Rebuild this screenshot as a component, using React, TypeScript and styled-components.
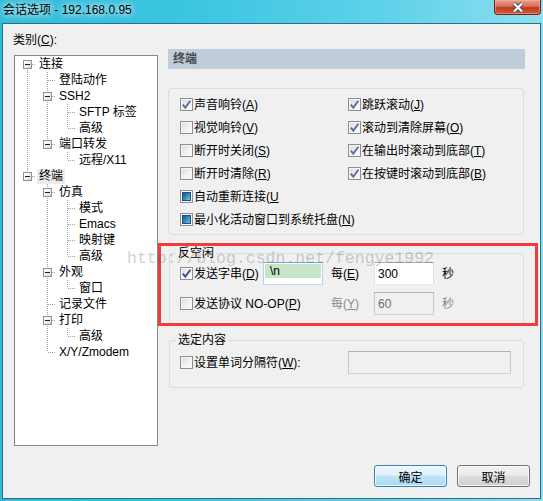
import React from "react";
import styled, { createGlobalStyle, css } from "styled-components";

const GlobalStyle = createGlobalStyle`
  html, body { margin: 0; padding: 0; background: #3fc6e1; }
  body {
    font-family: "Liberation Sans", "Noto Sans CJK SC", sans-serif;
    font-size: 12px;
    color: #000;
  }
  * { box-sizing: border-box; }
`;

const Window = styled.div`
  position: relative;
  width: 543px;
  height: 501px;
  display: flex;
  flex-direction: column;
  padding: 0 2px 2px 2px;
  background: linear-gradient(90deg, #2fbcd9 0%, #3bc5e1 35%, #5ed1e9 70%, #8cdff0 100%);
  overflow: hidden;
`;

const TitleBar = styled.div`
  height: 23px;
  display: flex;
  align-items: flex-start;
  justify-content: space-between;
`;

const Title = styled.div`
  padding: 2px 0 0 1px;
  line-height: 16px;
  text-shadow: 0 0 6px #fff, 0 0 10px rgba(255, 255, 255, 0.8);
`;

const CloseButton = styled.div`
  width: 47px;
  height: 15px;
  border: 1px solid #6a2419;
  border-top: none;
  border-radius: 0 0 4px 4px;
  background: linear-gradient(#e6a090, #d66e58 45%, #c0391f 55%, #d45a3d);
  box-shadow: inset 0 0 0 1px rgba(255, 190, 175, 0.45);
  display: flex;
  align-items: center;
  justify-content: center;
`;

const Client = styled.div`
  flex: 1;
  background: #f0f0f0;
  border: 1px solid #2f6f86;
  display: flex;
  flex-direction: column;
  padding: 8px 10px 0 11px;
`;

const Body = styled.div`
  display: flex;
  gap: 10px;
`;

const LeftColumn = styled.div`
  display: flex;
  flex-direction: column;
`;

const Caption = styled.div`
  line-height: 16px;
  margin: 0 0 7px -1px;
`;

const Tree = styled.div`
  width: 144px;
  height: 391px;
  background: #fff;
  border: 1px solid #828790;
`;

const TreeRow = styled.div`
  display: flex;
  align-items: center;
  height: 16px;
  white-space: nowrap;
`;

type Conn = "none" | "pass" | "tee" | "end" | "first";

const dotsV = "repeating-linear-gradient(to bottom, #a0a0a0 0 1px, transparent 1px 2px)";
const dotsH = "repeating-linear-gradient(to right, #a0a0a0 0 1px, transparent 1px 2px)";

const Guide = styled.span<{ $kind: Conn }>`
  width: 20px;
  height: 16px;
  flex: none;
  display: flex;
  align-items: center;
  background-repeat: no-repeat;
  ${({ $kind }) =>
    $kind === "pass"
      ? css`
          background-image: ${dotsV};
          background-position: 12px 0;
          background-size: 1px 16px;
        `
      : $kind === "tee"
      ? css`
          background-image: ${dotsV}, ${dotsH};
          background-position: 12px 0, 13px 8px;
          background-size: 1px 16px, 7px 1px;
        `
      : $kind === "end"
      ? css`
          background-image: ${dotsV}, ${dotsH};
          background-position: 12px 0, 13px 8px;
          background-size: 1px 8px, 7px 1px;
        `
      : $kind === "first"
      ? css`
          background-image: ${dotsV}, ${dotsH};
          background-position: 12px 8px, 13px 8px;
          background-size: 1px 8px, 7px 1px;
        `
      : ""}
`;

const Expander = styled.span`
  width: 9px;
  height: 9px;
  margin-left: 8px;
  border: 1px solid #919191;
  background: linear-gradient(135deg, #fff 0%, #f2f2f2 50%, #d6d6d6 100%);
  display: flex;
  align-items: center;
  justify-content: center;
  &::after {
    content: "";
    width: 5px;
    height: 1px;
    background: #1b1b1b;
  }
`;

const NodeLabel = styled.span<{ $selected?: boolean }>`
  margin-left: 2px;
  padding: 0 2px;
  line-height: 15px;
  background: ${({ $selected }) => ($selected ? "#ececec" : "transparent")};
`;

const RightColumn = styled.div`
  width: 357px;
  padding-top: 17px;
  display: flex;
  flex-direction: column;
`;

const Header = styled.div`
  height: 20px;
  line-height: 20px;
  padding-left: 5px;
  background: #bfcddb;
  color: #4a4a4a;
  font-weight: bold;
`;

const Group = styled.div`
  margin-top: 19px;
  width: 356px;
  border: 1px solid #d5dfe5;
  border-radius: 3px;
  padding: 4px 0 3px 11px;
  display: grid;
  grid-template-columns: 168px 1fr;
`;

const GroupWrap = styled.div<{ $gap: number }>`
  position: relative;
  margin-top: ${({ $gap }) => $gap}px;
`;

const FieldGroup = styled.fieldset<{ $pad: string }>`
  margin: 0 0 0 1px;
  width: 355px;
  min-width: 0;
  border: 1px solid #d5dfe5;
  border-radius: 3px;
  padding: ${({ $pad }) => $pad};
`;

const Legend = styled.legend`
  padding: 0 2px;
  margin-left: -4px;
  line-height: 14px;
`;

const IdleGrid = styled.div`
  display: grid;
  grid-template-columns: 83px 68px 43px 68px auto;
  grid-auto-rows: 23px;
  row-gap: 7px;
  align-items: center;
`;

const SelectGrid = styled.div`
  display: grid;
  grid-template-columns: 168px auto;
  grid-auto-rows: 23px;
  align-items: center;
`;

const Highlight = styled.div`
  position: absolute;
  left: -10px;
  top: -3px;
  width: 380px;
  height: 83px;
  border: 3px solid #f03c3c;
  pointer-events: none;
`;

const CheckRow = styled.div<{ $wide?: boolean }>`
  display: flex;
  align-items: center;
  height: 23px;
  white-space: nowrap;
  ${({ $wide }) => ($wide ? "grid-column: span 2;" : "")}
`;

type BoxState = "on" | "off" | "mixed";

const Box = styled.span`
  width: 13px;
  height: 13px;
  flex: none;
  margin-right: 1px;
  border: 1px solid #8f8f8f;
  background: linear-gradient(135deg, #d9d9d9 0%, #f3f3f3 60%, #fdfdfd 100%);
  box-shadow: inset 0 0 0 1px #f6f6f6;
  display: flex;
  align-items: center;
  justify-content: center;
`;

const Fill = styled.span`
  width: 9px;
  height: 9px;
  border: 1px solid #1f5078;
  background: linear-gradient(135deg, #1b5686 0%, #3a8fc0 55%, #7ec6e6 100%);
`;

const Text = styled.span<{ $muted?: boolean }>`
  color: ${({ $muted }) => ($muted ? "#8a8a8a" : "#000")};
  line-height: 16px;
  white-space: nowrap;
`;

const TextBox = styled.div<{ $w: number; $variant: "focus" | "normal" | "disabled" }>`
  width: ${({ $w }) => $w}px;
  height: 23px;
  display: flex;
  align-items: center;
  padding: 0 3px;
  border: 1px solid;
  ${({ $variant }) =>
    $variant === "focus"
      ? css`
          background: #fff;
          border-color: #7fa9d4 #b4d2ec #c2dbf0 #b4d2ec;
          align-items: flex-start;
          padding: 1px 1px 0 1px;
        `
      : $variant === "normal"
      ? css`
          background: #fff;
          border-color: #abadb3 #dbdfe6 #e3e9ef #e2e3ea;
        `
      : css`
          background: #f0f0f0;
          color: #6d6d6d;
          border-color: #adb2b5 #c8cbcd #d0d3d5 #c8cbcd;
        `}
`;

const Selected = styled.span`
  width: 56px;
  height: 14px;
  line-height: 14px;
  padding-left: 5px;
  background: #c7e5c9;
`;

const Footer = styled.div`
  display: flex;
  justify-content: flex-end;
  gap: 10px;
  margin-top: 19px;
`;

const Button = styled.div<{ $default?: boolean }>`
  width: 73px;
  height: 22px;
  border-radius: 3px;
  display: flex;
  align-items: center;
  justify-content: center;
  border: 1px solid ${({ $default }) => ($default ? "#3c7fb1" : "#707070")};
  background: ${({ $default }) =>
    $default
      ? "linear-gradient(#ecf7fd, #dff1fc 45%, #c1e5f9 50%, #a9daf6)"
      : "linear-gradient(#f2f2f2, #ebebeb 45%, #dddddd 50%, #cfcfcf)"};
  box-shadow: inset 0 0 0 1px rgba(255, 255, 255, 0.75);
`;

const Watermark = styled.div`
  position: absolute;
  left: 127px;
  top: 251px;
  font-family: "Liberation Mono", monospace;
  font-size: 16.5px;
  line-height: 16.5px;
  color: rgba(80, 80, 80, 0.28);
  white-space: nowrap;
  pointer-events: none;
`;

function Check({ state, dark }: { state: BoxState; dark?: boolean }) {
  return (
    <Box>
      {state === "on" && (
        <svg width="11" height="11" viewBox="0 0 11 11">
          <path
            d="M1.8 5.6 L4.3 8.6 L9.4 1.8"
            fill="none"
            stroke={dark ? "#3b4f8c" : "#5a6f9f"}
            strokeWidth="1.9"
          />
        </svg>
      )}
      {state === "mixed" && <Fill />}
    </Box>
  );
}

function Label({ text, k, tail = ")" }: { text: string; k: string; tail?: string }) {
  return (
    <>
      {text}(<u>{k}</u>
      {tail}
    </>
  );
}

interface TreeNode {
  label: string;
  guides: Conn[];
  open?: boolean;
  selected?: boolean;
}

const nodes: TreeNode[] = [
  { label: "连接", guides: ["first"], open: true },
  { label: "登陆动作", guides: ["pass", "tee"] },
  { label: "SSH2", guides: ["pass", "tee"], open: true },
  { label: "SFTP 标签", guides: ["pass", "pass", "tee"] },
  { label: "高级", guides: ["pass", "pass", "end"] },
  { label: "端口转发", guides: ["pass", "end"], open: true },
  { label: "远程/X11", guides: ["pass", "none", "end"] },
  { label: "终端", guides: ["end"], open: true, selected: true },
  { label: "仿真", guides: ["none", "tee"], open: true },
  { label: "模式", guides: ["none", "pass", "tee"] },
  { label: "Emacs", guides: ["none", "pass", "tee"] },
  { label: "映射键", guides: ["none", "pass", "tee"] },
  { label: "高级", guides: ["none", "pass", "end"] },
  { label: "外观", guides: ["none", "tee"], open: true },
  { label: "窗口", guides: ["none", "pass", "end"] },
  { label: "记录文件", guides: ["none", "tee"] },
  { label: "打印", guides: ["none", "tee"], open: true },
  { label: "高级", guides: ["none", "pass", "end"] },
  { label: "X/Y/Zmodem", guides: ["none", "end"] },
];

const terminalOptions: { text: string; k: string; state: BoxState; wide?: boolean; tail?: string }[] = [
  { text: "声音响铃", k: "A", state: "on" },
  { text: "跳跃滚动", k: "J", state: "on" },
  { text: "视觉响铃", k: "V", state: "off" },
  { text: "滚动到清除屏幕", k: "O", state: "on" },
  { text: "断开时关闭", k: "S", state: "off" },
  { text: "在输出时滚动到底部", k: "T", state: "on" },
  { text: "断开时清除", k: "R", state: "off" },
  { text: "在按键时滚动到底部", k: "B", state: "on" },
  { text: "自动重新连接", k: "U", state: "mixed", wide: true, tail: "" },
  { text: "最小化活动窗口到系统托盘", k: "N", state: "mixed", wide: true },
];

export default function App() {
  return (
    <Window>
      <GlobalStyle />
      <TitleBar>
        <Title>会话选项 - 192.168.0.95</Title>
        <CloseButton>
          <svg width="14" height="11" viewBox="0 0 14 11">
            <path d="M3 1.5 L11 9.5 M11 1.5 L3 9.5" stroke="#4a4a4a" strokeWidth="4" />
            <path d="M3 1.5 L11 9.5 M11 1.5 L3 9.5" stroke="#fff" strokeWidth="2.2" />
          </svg>
        </CloseButton>
      </TitleBar>

      <Client>
        <Body>
          <LeftColumn>
            <Caption>
              类别(<u>C</u>):
            </Caption>
            <Tree>
              {nodes.map((n, i) => (
                <TreeRow key={i}>
                  {n.guides.map((g, j) => (
                    <Guide key={j} $kind={g}>
                      {n.open && j === n.guides.length - 1 && <Expander />}
                    </Guide>
                  ))}
                  <NodeLabel $selected={n.selected}>{n.label}</NodeLabel>
                </TreeRow>
              ))}
            </Tree>
          </LeftColumn>

          <RightColumn>
            <Header>终端</Header>

            <Group>
              {terminalOptions.map((o) => (
                <CheckRow key={o.k} $wide={o.wide}>
                  <Check state={o.state} />
                  <Text>
                    <Label text={o.text} k={o.k} tail={o.tail} />
                  </Text>
                </CheckRow>
              ))}
            </Group>

            <GroupWrap $gap={11}>
              <FieldGroup $pad="2px 0 8px 10px">
                <Legend>反空闲</Legend>
                <IdleGrid>
                  <CheckRow>
                    <Check state="on" dark />
                    <Text>
                      <Label text="发送字串" k="D" />
                    </Text>
                  </CheckRow>
                  <TextBox $w={60} $variant="focus">
                    <Selected>\n</Selected>
                  </TextBox>
                  <Text>
                    <Label text="每" k="E" />
                  </Text>
                  <TextBox $w={60} $variant="normal">
                    300
                  </TextBox>
                  <Text>秒</Text>

                  <CheckRow>
                    <Check state="off" />
                    <Text>
                      发送协议 NO-OP(<u>P</u>)
                    </Text>
                  </CheckRow>
                  <span />
                  <Text $muted>
                    <Label text="每" k="Y" />
                  </Text>
                  <TextBox $w={60} $variant="disabled">
                    60
                  </TextBox>
                  <Text $muted>秒</Text>
                </IdleGrid>
              </FieldGroup>
              <Highlight />
            </GroupWrap>

            <GroupWrap $gap={9}>
              <FieldGroup $pad="4px 0 13px 10px">
                <Legend>选定内容</Legend>
                <SelectGrid>
                  <CheckRow>
                    <Check state="off" />
                    <Text>
                      设置单词分隔符(<u>W</u>):
                    </Text>
                  </CheckRow>
                  <TextBox $w={163} $variant="disabled" />
                </SelectGrid>
              </FieldGroup>
            </GroupWrap>
          </RightColumn>
        </Body>

        <Footer>
          <Button $default>确定</Button>
          <Button>取消</Button>
        </Footer>
      </Client>

      <Watermark>http://blog.csdn.net/fengye1992</Watermark>
    </Window>
  );
}
